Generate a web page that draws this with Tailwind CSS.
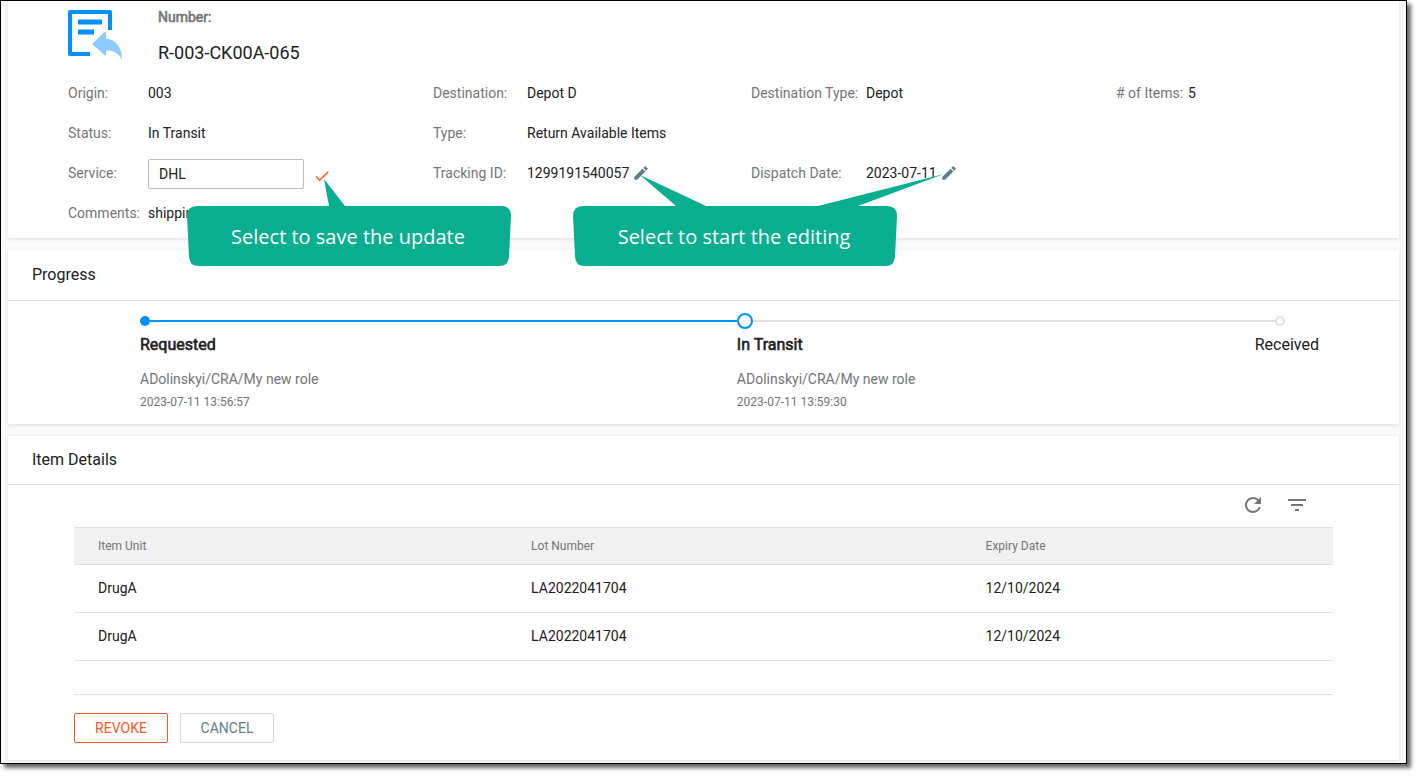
<!DOCTYPE html>
<html lang="en">
<head>
  <meta charset="UTF-8" />
  <meta name="viewport" content="width=device-width, initial-scale=1.0" />
  <title>Shipment R-003-CK00A-065</title>
  <script src="https://cdn.jsdelivr.net/npm/@tailwindcss/browser@4"></script>
</head>
<body class="bg-white pr-3 pb-3 font-[Roboto,sans-serif] text-sm text-[#212121]">
  <div class="flex flex-col gap-3 border border-black bg-[#fafafa] px-[7px] pb-[3px] shadow-[4px_4px_4px_rgba(0,0,0,0.6)]">

    <!-- Shipment summary -->
    <section class="bg-white px-[60px] pt-2 pb-[5px] shadow-[0_1px_4px_rgba(0,0,0,0.12)]">
      <header class="flex h-16 gap-9">
        <svg class="mt-px h-[50px] w-[54px]" viewBox="0 0 54 50" fill="none" aria-hidden="true">
          <path d="M22 44H2V2h40v18" stroke="#0091ff" stroke-width="4" stroke-linejoin="round" />
          <path d="M10 12h24M10 22h16" stroke="#0091ff" stroke-width="5" />
          <path d="M24 34L36 22.500Q38 21.500 38 23v5.500C47 29.500 54 36 54 50c-3.500-7-8.500-9.500-16-9.500V45Q38 46 36.500 45z" fill="#8ccaff" />
        </svg>
        <div>
          <h2 class="leading-4 text-[#757575] [-webkit-text-stroke:0.6px_#757575]">Number:</h2>
          <p class="mt-4 text-lg leading-6">R-003-CK00A-065</p>
        </div>
      </header>

      <div class="grid auto-rows-[40px] grid-cols-[365fr_318fr_365fr_223fr] items-center">
        <div class="flex"><span class="w-20 text-[#757575]">Origin:</span><span>003</span></div>
        <div class="flex"><span class="w-[94px] text-[#757575]">Destination:</span><span>Depot D</span></div>
        <div class="flex"><span class="w-[115px] text-[#757575]">Destination Type:</span><span>Depot</span></div>
        <div class="flex"><span class="w-[72px] text-[#757575]"># of Items:</span><span>5</span></div>

        <div class="flex"><span class="w-20 text-[#757575]">Status:</span><span>In Transit</span></div>
        <div class="col-span-3 flex"><span class="w-[94px] text-[#757575]">Type:</span><span>Return Available Items</span></div>

        <div class="relative flex h-10 items-center">
          <label for="service" class="w-20 text-[#757575]">Service:</label>
          <input id="service" type="text" value="DHL" class="mt-0.5 h-[30px] w-[156px] rounded-xs border border-[#bdbdbd] bg-white px-2.5" />
          <button type="button" aria-label="Save" class="mt-1.5 ml-[9px]">
            <svg class="size-[18px]" viewBox="0 0 24 24" fill="#ff5722"><path d="M9 16.170L4.830 12l-1.420 1.410L9 19 21 7l-1.410-1.410z" /></svg>
          </button>
          <div class="absolute top-[26px] left-[119px] z-10 h-[87px] w-[324px]">
            <svg class="absolute inset-0" width="324" height="87" viewBox="0 0 324 87" fill="#09ae90" aria-hidden="true">
              <path d="M10 27H142L137 0 158 27H314Q324 27 324 37L322 77Q322 87 312 87H12Q2 87 2 77L0 37Q0 27 10 27z" />
            </svg>
            <p class="relative pt-7 pr-0.5 text-center font-['Open_Sans',sans-serif] text-xl leading-[60px] text-white">Select to save the update</p>
          </div>
        </div>
        <div class="relative flex h-10 items-center">
          <span class="w-[94px] text-[#757575]">Tracking ID:</span><span>1299191540057</span>
          <button type="button" aria-label="Edit tracking ID" class="ml-[3px]">
            <svg class="size-[18px]" viewBox="0 0 24 24" fill="#607d8b"><path d="M3 17.250V21h3.750L17.810 9.940l-3.750-3.750L3 17.250zM20.710 7.040a1 1 0 0 0 0-1.410l-2.340-2.340a1 1 0 0 0-1.410 0l-1.830 1.830 3.750 3.750 1.830-1.830z" /></svg>
          </button>
          <div class="absolute top-[21px] left-[140px] z-10 h-[92px] w-[324px]">
            <svg class="absolute inset-0 overflow-visible" width="324" height="92" viewBox="0 0 324 92" fill="#09ae90" aria-hidden="true">
              <path d="M10 32H103L67 1 133 32H245L371 0 285 32H314Q324 32 324 42L322 82Q322 92 312 92H12Q2 92 2 82L0 42Q0 32 10 32z" />
            </svg>
            <p class="relative pt-[33px] pr-0.5 text-center font-['Open_Sans',sans-serif] text-xl leading-[60px] text-white">Select to start the editing</p>
          </div>
        </div>
        <div class="col-span-2 flex items-center">
          <span class="w-[115px] text-[#757575]">Dispatch Date:</span><span>2023-07-11</span>
          <button type="button" aria-label="Edit dispatch date" class="ml-[3px]">
            <svg class="size-[18px]" viewBox="0 0 24 24" fill="#607d8b"><path d="M3 17.250V21h3.750L17.810 9.940l-3.750-3.750L3 17.250zM20.710 7.040a1 1 0 0 0 0-1.410l-2.340-2.340a1 1 0 0 0-1.410 0l-1.830 1.830 3.750 3.750 1.830-1.830z" /></svg>
          </button>
        </div>

        <div class="flex"><span class="w-20 text-[#757575]">Comments:</span><span>shipping</span></div>
      </div>
    </section>

    <!-- Progress -->
    <section class="bg-white shadow-[0_1px_4px_rgba(0,0,0,0.12)]">
      <h2 class="border-b border-[#e0e0e0] px-6 pt-[13px] pb-[13px] text-base leading-6">Progress</h2>
      <ol class="flex pt-3 pr-20 pb-3 pl-[132px]">
        <li class="flex-[597_1_0px]">
          <div class="flex h-4 items-center">
            <span class="size-2.5 rounded-full bg-[#0091ff]"></span>
            <span class="h-0.5 flex-1 bg-[#0091ff]"></span>
          </div>
          <h3 class="mt-1 text-base leading-6 [-webkit-text-stroke:0.6px_#212121]">Requested</h3>
          <p class="mt-3 leading-5 text-[#757575]">ADolinskyi/CRA/My new role</p>
          <p class="mt-[3px] text-xs leading-5 text-[#757575]">2023-07-11 13:56:57</p>
        </li>
        <li class="flex-[518_1_0px]">
          <div class="flex h-4 items-center">
            <span class="size-4 rounded-full border-2 border-[#0091ff]"></span>
            <span class="h-0.5 flex-1 bg-[#e0e0e0]"></span>
          </div>
          <h3 class="mt-1 text-base leading-6 [-webkit-text-stroke:0.6px_#212121]">In Transit</h3>
          <p class="mt-3 leading-5 text-[#757575]">ADolinskyi/CRA/My new role</p>
          <p class="mt-[3px] text-xs leading-5 text-[#757575]">2023-07-11 13:59:30</p>
        </li>
        <li>
          <div class="flex h-4 items-center">
            <span class="h-0.5 w-5 bg-[#e0e0e0]"></span>
            <span class="size-2.5 rounded-full border-2 border-[#e0e0e0]"></span>
          </div>
          <h3 class="mt-1 text-base leading-6">Received</h3>
        </li>
      </ol>
    </section>

    <!-- Item details -->
    <section class="bg-white shadow-[0_1px_4px_rgba(0,0,0,0.12)]">
      <h2 class="border-b border-[#e0e0e0] px-6 py-3 text-base leading-6">Item Details</h2>
      <div class="px-[66px] pb-[17px]">
        <div class="flex h-[42px] items-start justify-end gap-5 pt-2 pr-6">
          <button type="button" aria-label="Refresh">
            <svg class="size-6" viewBox="0 0 24 24" fill="#757575"><path d="M17.650 6.350A8 8 0 1 0 19.730 14h-2.080A6 6 0 1 1 12 6c1.660 0 3.140.69 4.220 1.780L13 11h7V4l-2.350 2.350z" /></svg>
          </button>
          <button type="button" aria-label="Filter">
            <svg class="size-6" viewBox="0 0 24 24" fill="#757575"><path d="M10 18h4v-2h-4v2zM3 6v2h18V6H3zm3 7h12v-2H6v2z" /></svg>
          </button>
        </div>
        <table class="w-full table-fixed border-separate border-spacing-0 text-left">
          <thead class="bg-[#f1f1f1] text-xs text-[#757575]">
            <tr class="h-[38px]">
              <th class="w-[34.4%] border-y border-[#e0e0e0] px-6 font-normal">Item Unit</th>
              <th class="w-[36.1%] border-y border-[#e0e0e0] px-6 font-normal">Lot Number</th>
              <th class="border-y border-[#e0e0e0] px-6 font-normal">Expiry Date</th>
            </tr>
          </thead>
          <tbody>
            <tr class="h-12">
              <td class="border-b border-[#e0e0e0] px-6 pb-0.5">DrugA</td>
              <td class="border-b border-[#e0e0e0] px-6 pb-0.5">LA2022041704</td>
              <td class="border-b border-[#e0e0e0] px-6 pb-0.5">12/10/2024</td>
            </tr>
            <tr class="h-12">
              <td class="border-b border-[#e0e0e0] px-6 pb-0.5">DrugA</td>
              <td class="border-b border-[#e0e0e0] px-6 pb-0.5">LA2022041704</td>
              <td class="border-b border-[#e0e0e0] px-6 pb-0.5">12/10/2024</td>
            </tr>
          </tbody>
        </table>
        <div class="h-[34px] border-b border-[#e0e0e0]"></div>
        <div class="flex gap-3 pt-[18px]">
          <button type="button" class="h-[30px] w-[94px] rounded-xs border border-[#ff5722] text-[#ff5722]">REVOKE</button>
          <button type="button" class="h-[30px] w-[94px] rounded-xs border border-[#cfd8dc] text-[#607d8b]">CANCEL</button>
        </div>
      </div>
    </section>
  </div>
</body>
</html>
